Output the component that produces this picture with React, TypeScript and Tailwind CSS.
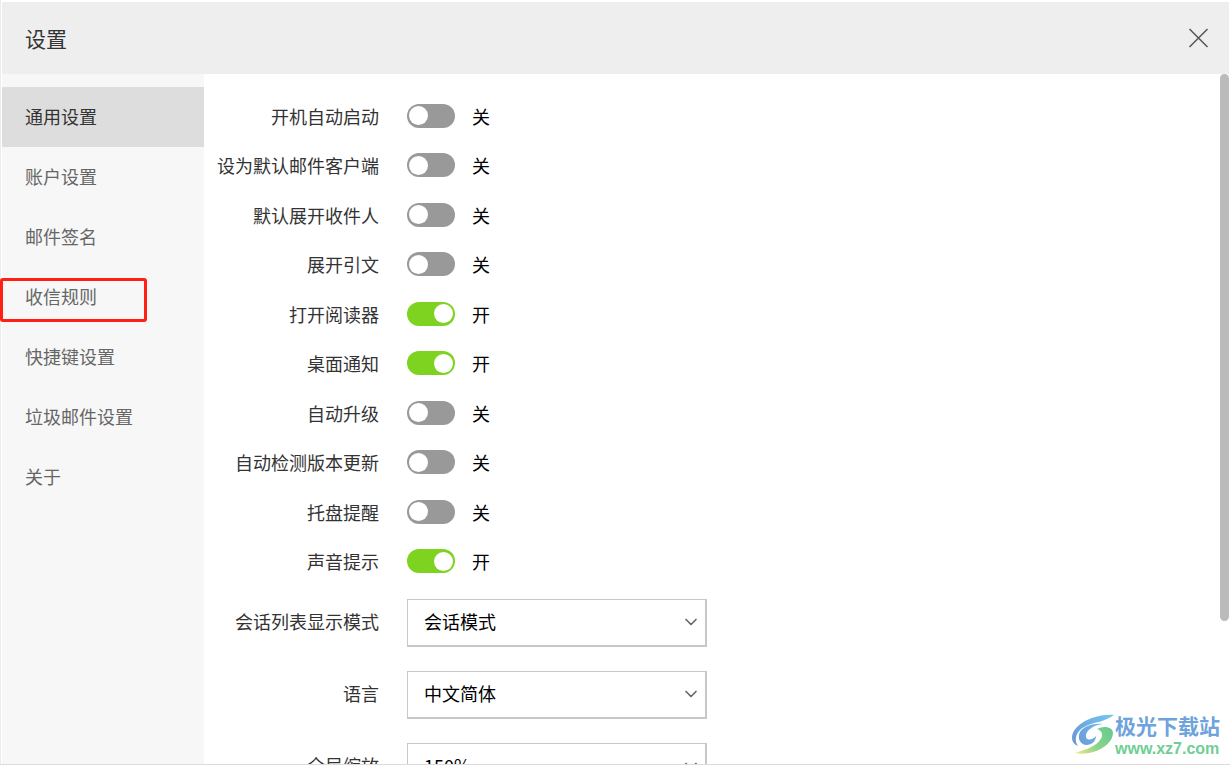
import React, { useState } from 'react'
import { ChevronDown } from 'lucide-react'

const menuItems = [
  { title: '通用设置' },
  { title: '账户设置' },
  { title: '邮件签名' },
  { title: '收信规则', marked: true },
  { title: '快捷键设置' },
  { title: '垃圾邮件设置' },
  { title: '关于' },
]

const switches = [
  { id: 'autostart', label: '开机自动启动', on: false },
  { id: 'default-client', label: '设为默认邮件客户端', on: false },
  { id: 'expand-recipients', label: '默认展开收件人', on: false },
  { id: 'expand-quote', label: '展开引文', on: false },
  { id: 'reader', label: '打开阅读器', on: true },
  { id: 'desktop-notice', label: '桌面通知', on: true },
  { id: 'auto-upgrade', label: '自动升级', on: false },
  { id: 'check-version', label: '自动检测版本更新', on: false },
  { id: 'tray', label: '托盘提醒', on: false },
  { id: 'sound', label: '声音提示', on: true },
]

const selects = [
  { id: 'list-mode', label: '会话列表显示模式', options: ['会话模式'] },
  { id: 'language', label: '语言', options: ['中文简体'] },
  { id: 'zoom', label: '全局缩放', options: ['150%'] },
]

function SwitchRow({ id, label, on }: { id: string; label: string; on: boolean }) {
  const [checked, setChecked] = useState(on)

  return (
    <div className="flex items-center">
      <label htmlFor={id} className="w-[175px] shrink-0 text-right text-[#333]">
        {label}
      </label>
      <input
        id={id}
        type="checkbox"
        role="switch"
        checked={checked}
        onChange={(e) => setChecked(e.target.checked)}
        className="ml-7 flex h-6 w-12 shrink-0 appearance-none items-center rounded-full bg-[#999] px-[2px] before:size-[19px] before:rounded-full before:bg-white checked:justify-end checked:bg-[#7ed321]"
      />
      <span className="ml-[17px] text-black">{checked ? '开' : '关'}</span>
    </div>
  )
}

function SelectRow({ id, label, options }: { id: string; label: string; options: string[] }) {
  return (
    <div className="flex items-center">
      <label htmlFor={id} className="w-[175px] shrink-0 pb-1 text-right text-[#333]">
        {label}
      </label>
      <div className="relative ml-7 w-[300px]">
        <select
          id={id}
          className="h-12 w-full appearance-none border border-r-2 border-b-2 border-[#c8c8c8] bg-white pb-1 pl-4 text-black"
        >
          {options.map((option) => (
            <option key={option}>{option}</option>
          ))}
        </select>
        <ChevronDown
          size={20}
          strokeWidth={2}
          className="pointer-events-none absolute top-[13px] right-[6px] text-[#666]"
        />
      </div>
    </div>
  )
}

function Watermark() {
  return (
    <div className="absolute right-[10px] bottom-[7px] flex items-center">
      <svg width="44" height="42" viewBox="0 0 44 42" fill="none">
        <defs>
          <linearGradient id="wm-blue" x1="2" y1="30" x2="40" y2="2" gradientUnits="userSpaceOnUse">
            <stop stopColor="#6a98d6" />
            <stop offset="1" stopColor="#72c4f2" />
          </linearGradient>
          <linearGradient id="wm-green" x1="5" y1="40" x2="42" y2="14" gradientUnits="userSpaceOnUse">
            <stop stopColor="#f3e87c" />
            <stop offset="0.45" stopColor="#8ed58c" />
            <stop offset="1" stopColor="#63c98f" />
          </linearGradient>
        </defs>
        <path d="M43 1C33 0 20 3 11 9C3 14 -1 22 2 28C3 30 5 31 7 32C2 25 6 16 15 12C23 8 34 8 43 1Z" fill="url(#wm-blue)" />
        <path d="M32 10C22 9 13 12 9 18C6 24 9 30 15 31C21 31 25 27 25 22C22 26 16 27 15 23C14 17 22 11 32 10Z" fill="url(#wm-blue)" />
        <path d="M26 15C33 11 42 13 42 19C42 27 33 35 22 38C16 40 9 40 4 39C14 36 25 32 29 26C33 21 31 17 26 15Z" fill="url(#wm-green)" />
      </svg>
      <div className="flex flex-col gap-1">
        <span className="text-[21px] leading-6 font-bold text-[#6ea3dc]">极光下载站</span>
        <span className="font-['Liberation_Sans'] text-[16px] leading-4 font-bold text-[#6fce93]">www.xz7.com</span>
      </div>
    </div>
  )
}

function App() {
  const [active, setActive] = useState('通用设置')

  return (
    <div className="relative flex h-screen flex-col overflow-hidden border-b border-[#dcdcdc] bg-white pt-[2px] pr-px pl-[2px] font-['Noto_Sans_CJK_SC',sans-serif] text-[18px] leading-6 shadow-[inset_1px_0_0_#ececec]">
      <header className="flex h-[72px] shrink-0 items-center justify-between bg-[#eee] pr-5 pl-[23px]">
        <h1 className="text-[21px] text-[#333]">设置</h1>
        <button aria-label="关闭" className="text-[#555]">
          <svg width="22" height="22" viewBox="0 0 22 22" fill="none" stroke="currentColor" strokeWidth="1.5">
            <path d="M2.500 2L20.500 20M20.500 2L2.500 20" />
          </svg>
        </button>
      </header>

      <div className="flex min-h-0 flex-1">
        <nav className="w-[202px] shrink-0 bg-[#f7f7f7] pt-[13px]">
          {menuItems.map((item) => (
            <button
              key={item.title}
              onClick={() => setActive(item.title)}
              className={`relative block h-15 w-full pb-[2px] pl-[23px] text-left ${
                active === item.title ? 'bg-[#ddd] text-[#333]' : 'text-[#666]'
              }`}
            >
              {item.title}
              {item.marked && (
                <span className="absolute top-[11px] -left-[2px] h-11 w-[147px] rounded-[3px] border-3 border-[#ff1f14]" />
              )}
            </button>
          ))}
        </nav>

        <main className="relative min-w-0 flex-1 overflow-hidden pt-[17px]">
          <div className="grid h-[495px] auto-rows-fr">
            {switches.map((item) => (
              <SwitchRow key={item.id} {...item} />
            ))}
          </div>
          <div className="mt-[13px] flex flex-col gap-6">
            {selects.map((item) => (
              <SelectRow key={item.id} {...item} />
            ))}
          </div>
          <div className="absolute top-0 right-0 h-[547px] w-[9px] rounded-full bg-[#bbb]" />
        </main>
      </div>

      <Watermark />
    </div>
  )
}

export default App
